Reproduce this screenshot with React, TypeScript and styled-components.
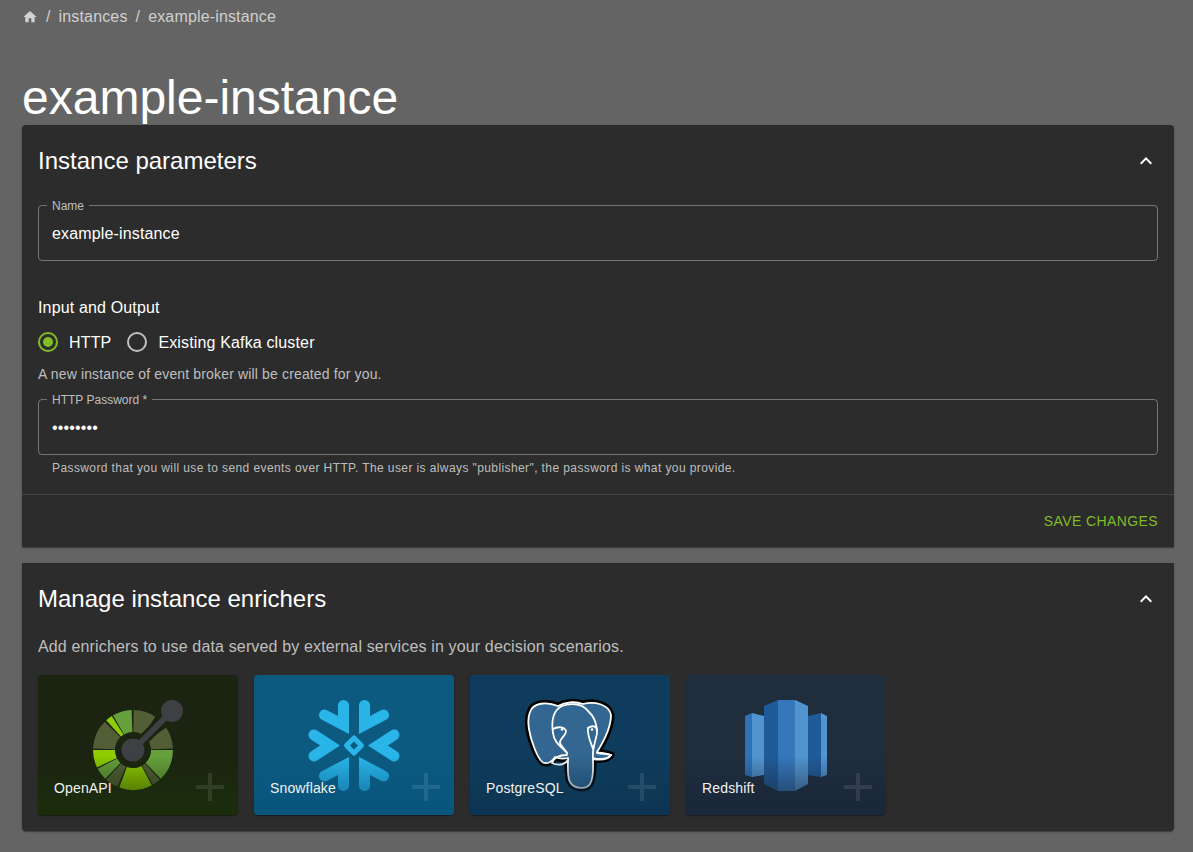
import React from "react";
import styled, { createGlobalStyle } from "styled-components";

const Global = createGlobalStyle`
  html, body { margin: 0; padding: 0; background: #646464; }
  body { font-family: "Liberation Sans", Arial, sans-serif; color: #fff; }
  * { box-sizing: border-box; }
`;

const Page = styled.div`
  min-height: 852px;
  padding: 5px 19px 0 22px;
`;
const Crumbs = styled.nav`
  display: flex;
  align-items: center;
  height: 24px;
  font-size: 16px;
  letter-spacing: 0.15px;
  color: rgba(255, 255, 255, 0.7);
`;
const HomeIcon = styled.svg`
  width: 16px;
  height: 16px;
  fill: rgba(255, 255, 255, 0.7);
`;
const Sep = styled.span`
  margin: 0 8px;
`;
const Title = styled.h1`
  margin: 41px 0 0;
  height: 55px;
  font-size: 48px;
  font-weight: 400;
  line-height: 56px;
  color: #fff;
`;
const Panel = styled.section<{ $first?: boolean }>`
  background: #2c2c2c;
  border-radius: ${(p) => (p.$first ? "4px 4px 0 0" : "0 0 4px 4px")};
  margin-bottom: 16px;
  box-shadow: 0 2px 1px -1px rgba(0, 0, 0, 0.2), 0 1px 1px 0 rgba(0, 0, 0, 0.14), 0 1px 3px 0 rgba(0, 0, 0, 0.12);
`;
const PanelHeader = styled.header`
  height: 72px;
  padding: 0 16px;
  display: flex;
  align-items: center;
  justify-content: space-between;
`;
const PanelTitle = styled.h2`
  margin: 0;
  font-size: 24px;
  font-weight: 400;
  line-height: 32px;
`;
const Chevron = styled.svg`
  width: 24px;
  height: 24px;
  fill: #fff;
`;
const PanelBody = styled.div<{ $bottom?: number }>`
  padding: 8px 16px ${(p) => p.$bottom ?? 0}px;
`;
const Field = styled.div`
  position: relative;
  height: 56px;
  border: 1px solid rgba(255, 255, 255, 0.35);
  border-radius: 4px;
`;
const FieldLabel = styled.label`
  position: absolute;
  left: 8px;
  top: -7px;
  padding: 0 5px;
  background: #2c2c2c;
  font-size: 12px;
  line-height: 14px;
  color: rgba(255, 255, 255, 0.7);
`;
const FieldInput = styled.input`
  display: block;
  width: 100%;
  height: 54px;
  padding: 2px 13px 0;
  border: 0;
  outline: 0;
  background: transparent;
  color: #fff;
  font-family: "Liberation Sans", Arial, sans-serif;
  font-size: 16px;
  letter-spacing: 0.15px;
`;
const GroupLabel = styled.div`
  margin-top: 35px;
  font-size: 16px;
  line-height: 24px;
  letter-spacing: 0.15px;
`;
const RadioRow = styled.div`
  display: flex;
  align-items: center;
  gap: 16px;
  height: 42px;
  margin-top: 1px;
`;
const RadioOption = styled.div`
  display: flex;
  align-items: center;
  gap: 11px;
  font-size: 16px;
  letter-spacing: 0.15px;
`;
const RadioText = styled.span`
  padding-top: 2px;
`;
const RadioRing = styled.span<{ $on?: boolean }>`
  position: relative;
  display: block;
  width: 20px;
  height: 20px;
  border-radius: 50%;
  border: 2px solid ${(p) => (p.$on ? "#80bd26" : "rgba(255,255,255,0.7)")};
  &::after {
    content: "";
    display: ${(p) => (p.$on ? "block" : "none")};
    position: absolute;
    left: 3px;
    top: 3px;
    width: 10px;
    height: 10px;
    border-radius: 50%;
    background: #80bd26;
  }
`;
const Hint = styled.p`
  margin: 1px 0 15px;
  font-size: 14px;
  line-height: 20px;
  letter-spacing: 0.15px;
  color: rgba(255, 255, 255, 0.7);
`;
const FieldHelp = styled.p`
  margin: 3px 14px 16px;
  font-size: 12px;
  line-height: 20px;
  letter-spacing: 0.4px;
  color: rgba(255, 255, 255, 0.7);
`;
const Actions = styled.footer`
  height: 53px;
  padding: 0 16px;
  border-top: 1px solid rgba(255, 255, 255, 0.12);
  display: flex;
  align-items: center;
  justify-content: flex-end;
`;
const SaveButton = styled.button`
  padding: 0;
  border: 0;
  background: none;
  color: #80bd26;
  font-family: "Liberation Sans", Arial, sans-serif;
  font-size: 14px;
  letter-spacing: 0.4px;
  text-transform: uppercase;
`;
const Intro = styled.p`
  margin: -8px 0 16px;
  font-size: 16px;
  line-height: 24px;
  letter-spacing: 0.15px;
  color: rgba(255, 255, 255, 0.7);
`;
const CardRow = styled.div`
  display: flex;
  gap: 16px;
`;
const Card = styled.article<{ $bg: string; $fade: string }>`
  position: relative;
  width: 200px;
  height: 140px;
  border-radius: 4px;
  overflow: hidden;
  background: ${(p) => p.$bg};
  box-shadow: 0 2px 1px -1px rgba(0, 0, 0, 0.2), 0 1px 1px 0 rgba(0, 0, 0, 0.14), 0 1px 3px 0 rgba(0, 0, 0, 0.12);
  &::after {
    content: "";
    position: absolute;
    inset: 58% 0 0 0;
    background: linear-gradient(to bottom, transparent, ${(p) => p.$fade} 85%);
    opacity: 0.7;
  }
`;
const Logo = styled.svg`
  display: block;
  width: 200px;
  height: 140px;
`;
const CardName = styled.span`
  position: absolute;
  left: 16px;
  bottom: 17px;
  z-index: 1;
  font-size: 14px;
  line-height: 20px;
  letter-spacing: 0.15px;
  color: #f2f2f2;
`;
const PlusMark = styled.svg`
  position: absolute;
  left: 157px;
  top: 97px;
  width: 30px;
  height: 30px;
  z-index: 1;
  fill: rgba(255, 255, 255, 0.1);
`;

const wedge = (from: number, to: number, r0 = 18, r1 = 40) => {
  const pt = (a: number, r: number) => {
    const t = (a * Math.PI) / 180;
    return `${(95 + r * Math.sin(t)).toFixed(2)} ${(75 - r * Math.cos(t)).toFixed(2)}`;
  };
  return `M${pt(from, r0)}L${pt(from, r1)}A${r1} ${r1} 0 0 1 ${pt(to, r1)}L${pt(to, r0)}A${r0} ${r0} 0 0 0 ${pt(from, r0)}Z`;
};

const OLIVE = "#515e36";
const MID = "#66a03c";
const BRIGHT = "#8fcb00";
const segments: [number, number, string][] = [
  [1, 34, OLIVE],
  [56, 88, OLIVE],
  [90, 136, MID],
  [138, 150, OLIVE],
  [152, 200, BRIGHT],
  [203, 222, OLIVE],
  [224, 242, MID],
  [244, 270, BRIGHT],
  [272, 315, OLIVE],
  [318, 328, BRIGHT],
  [330, 358, MID],
];

const OpenApiLogo = () => (
  <Logo viewBox="0 0 200 140">
    {segments.map(([a, b, c]) => (
      <path key={a} d={wedge(a, b)} fill={c} />
    ))}
    <path d="M95 75L134 36" stroke="#1a2410" strokeWidth="11" />
    <circle cx="95" cy="75" r="17.5" fill="#1a2410" />
    <path d="M95 75L134 36" stroke="#3f4044" strokeWidth="6" />
    <circle cx="95" cy="75" r="11.500" fill="#3f4044" />
    <circle cx="134" cy="36" r="11" fill="#3f4044" />
  </Logo>
);

const SnowflakeLogo = () => (
  <Logo viewBox="0 0 200 140">
    <g fill="none" stroke="#29b5e8" strokeWidth="11" strokeLinecap="round" strokeLinejoin="miter">
      <path d="M89.500 30.500V50L70.500 40" />
      <path d="M110.500 30.500V50L129.500 40" />
      <path d="M89.500 110.500V91L70.500 101" />
      <path d="M110.500 110.500V91L129.500 101" />
      <path d="M60 60L76 70.500L60 81" />
      <path d="M140 60L124 70.500L140 81" />
    </g>
    <path d="M100 63L107.500 70.500L100 78L92.500 70.500Z" fill="none" stroke="#29b5e8" strokeWidth="5" strokeLinejoin="round" />
  </Logo>
);

const silhouette =
  "M88 31C76 26 63 28 60 37C56 46 60 62 64 72C67 80 71 88 75 88C80 89 83 85 85 82C89 84 94 84 98 83C98 92 97 102 100 107C104 114 116 115 120 109C124 103 123 92 123 84C130 85 138 85 141 80C136 78 130 78 127 77C134 66 141 52 141 40C139 29 124 26 113 29C105 26 95 27 88 31Z";

const PostgresLogo = () => (
  <Logo viewBox="0 0 200 140">
    <path d={silhouette} fill="#000" stroke="#000" strokeWidth="7" strokeLinejoin="round" />
    <path d={silhouette} fill="#336791" stroke="#fff" strokeWidth="1.800" strokeLinejoin="round" />
    <g fill="none" stroke="#fff" strokeWidth="1.800" strokeLinecap="round">
      <path d="M97 78C92 72 84 68 83 58C81 45 84 35 92 31C100 28 112 28 118 36C125 42 127 50 127 58C126 66 122 72 123 84" />
      <path d="M83 54C88 51 95 52 96 56C96 61 89 64 90 68C91 72 96 75 97 78" />
      <path d="M118 53C122 50 127 51 127 55" />
      <path d="M118 53C117 60 121 68 123 74" />
      <path d="M97 80C90 80 84 82 82 88C88 91 95 90 98 85" />
      <path d="M127 78C132 79 138 79 141 80C138 84 130 85 123 83" />
    </g>
    <circle cx="92" cy="54.500" r="1.300" fill="#fff" />
    <circle cx="122" cy="54.500" r="1.300" fill="#fff" />
  </Logo>
);

const RedshiftLogo = () => (
  <Logo viewBox="0 0 200 140">
    <polygon points="59,41 66,38 66,102 59,100" fill="#2e73b8" />
    <polygon points="66,38 78,41 78,100 66,102" fill="#5294cf" />
    <polygon points="122,41 135,38 135,102 122,100" fill="#205b99" />
    <polygon points="135,38 141,41 141,100 135,102" fill="#5294cf" />
    <polygon points="78,31 92,25 92,116 78,109" fill="#205b99" />
    <polygon points="92,25 109,25 109,116 92,116" fill="#3477bb" />
    <polygon points="109,25 122,31 122,109 109,116" fill="#5294cf" />
  </Logo>
);

const Plus = () => (
  <PlusMark viewBox="0 0 30 30">
    <path d="M13 1h4v12h12v4H17v12h-4V17H1v-4h12z" />
  </PlusMark>
);

const ExpandLess = () => (
  <Chevron viewBox="0 0 24 24">
    <path d="m12 8-6 6 1.41 1.41L12 10.83l4.59 4.58L18 14z" />
  </Chevron>
);

const enrichers = [
  { name: "OpenAPI", bg: "#1a2410", fade: "#1c300c", logo: <OpenApiLogo /> },
  { name: "Snowflake", bg: "#0c5a80", fade: "#06537c", logo: <SnowflakeLogo /> },
  { name: "PostgreSQL", bg: "#0f3c5c", fade: "#0c3350", logo: <PostgresLogo /> },
  { name: "Redshift", bg: "#1f2d3d", fade: "#172538", logo: <RedshiftLogo /> },
];

export default function App() {
  return (
    <Page>
      <Global />
      <Crumbs>
        <HomeIcon viewBox="0 0 24 24">
          <path d="M10 20v-6h4v6h5v-8h3L12 3 2 12h3v8z" />
        </HomeIcon>
        <Sep>/</Sep>
        <span>instances</span>
        <Sep>/</Sep>
        <span>example-instance</span>
      </Crumbs>
      <Title>example-instance</Title>
      <Panel $first>
        <PanelHeader>
          <PanelTitle>Instance parameters</PanelTitle>
          <ExpandLess />
        </PanelHeader>
        <PanelBody>
          <Field>
            <FieldLabel>Name</FieldLabel>
            <FieldInput readOnly value="example-instance" />
          </Field>
          <GroupLabel>Input and Output</GroupLabel>
          <RadioRow>
            <RadioOption>
              <RadioRing $on />
              <RadioText>HTTP</RadioText>
            </RadioOption>
            <RadioOption>
              <RadioRing />
              <RadioText>Existing Kafka cluster</RadioText>
            </RadioOption>
          </RadioRow>
          <Hint>A new instance of event broker will be created for you.</Hint>
          <Field>
            <FieldLabel>HTTP Password *</FieldLabel>
            <FieldInput readOnly type="password" value="password" />
          </Field>
          <FieldHelp>
            Password that you will use to send events over HTTP. The user is always "publisher", the password is what you provide.
          </FieldHelp>
        </PanelBody>
        <Actions>
          <SaveButton>Save changes</SaveButton>
        </Actions>
      </Panel>
      <Panel>
        <PanelHeader>
          <PanelTitle>Manage instance enrichers</PanelTitle>
          <ExpandLess />
        </PanelHeader>
        <PanelBody $bottom={16}>
          <Intro>Add enrichers to use data served by external services in your decision scenarios.</Intro>
          <CardRow>
            {enrichers.map((e) => (
              <Card key={e.name} $bg={e.bg} $fade={e.fade}>
                {e.logo}
                <CardName>{e.name}</CardName>
                <Plus />
              </Card>
            ))}
          </CardRow>
        </PanelBody>
      </Panel>
    </Page>
  );
}
